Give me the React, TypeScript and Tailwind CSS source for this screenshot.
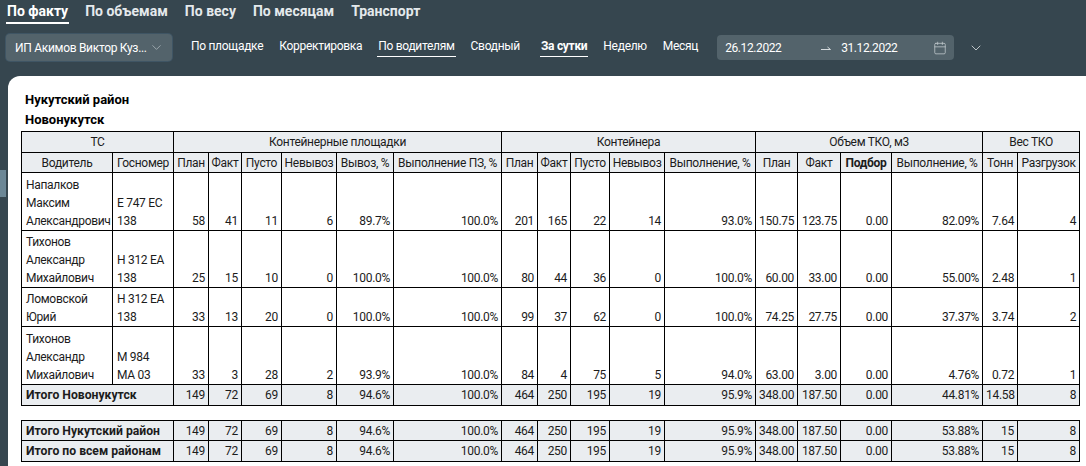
import { Calendar, ChevronDown } from 'lucide-react';

const widths = [91, 61, 35, 33, 40, 55, 57, 108, 36, 33, 39, 55, 91, 42, 43, 51, 91, 35, 62];

interface Row {
    name: string[];
    plate: string[];
    height: string;
    values: string[];
}

const rows: Row[] = [
    {
        name: ['Напалков', 'Максим', 'Александрович'],
        plate: ['Е 747 ЕС', '138'],
        height: 'h-[58px]',
        values: ['58', '41', '11', '6', '89.7%', '100.0%', '201', '165', '22', '14', '93.0%', '150.75', '123.75', '0.00', '82.09%', '7.64', '4'],
    },
    {
        name: ['Тихонов', 'Александр', 'Михайлович'],
        plate: ['Н 312 ЕА', '138'],
        height: 'h-[57px]',
        values: ['25', '15', '10', '0', '100.0%', '100.0%', '80', '44', '36', '0', '100.0%', '60.00', '33.00', '0.00', '55.00%', '2.48', '1'],
    },
    {
        name: ['Ломовской', 'Юрий'],
        plate: ['Н 312 ЕА', '138'],
        height: 'h-[39px]',
        values: ['33', '13', '20', '0', '100.0%', '100.0%', '99', '37', '62', '0', '100.0%', '74.25', '27.75', '0.00', '37.37%', '3.74', '2'],
    },
    {
        name: ['Тихонов', 'Александр', 'Михайлович'],
        plate: ['М 984', 'МА 03'],
        height: 'h-[58px]',
        values: ['33', '3', '28', '2', '93.9%', '100.0%', '84', '4', '75', '5', '94.0%', '63.00', '3.00', '0.00', '4.76%', '0.72', '1'],
    },
];

const totalBase = ['149', '72', '69', '8', '94.6%', '100.0%', '464', '250', '195', '19', '95.9%', '348.00', '187.50', '0.00'];

const Cols = () => (
    <colgroup>
        {widths.map((w, i) => (<col key={i} style={{ width: w }} />))}
    </colgroup>
);

const Th = ({ label, span, bold }: { label: string; span?: number; bold?: boolean }) => (
    <th colSpan={span} className={`border border-black bg-[#eaedf0] p-0 text-center whitespace-nowrap ${bold ? 'font-bold' : 'font-normal'}`}>
        {label}
    </th>
);

const Total = ({ label, values, height }: { label: string; values: string[]; height: string }) => (
    <tr className={`${height} bg-[#eaedf0]`}>
        <td colSpan={2} className="border border-black px-1 py-0 font-bold whitespace-nowrap text-[12.2px] tracking-normal">{label}</td>
        {values.map((v, i) => (
            <td key={i} className="border border-black px-[3px] py-0 text-right">{v}</td>
        ))}
    </tr>
);

const TopTab = ({ label, active }: { label: string; active?: boolean }) => (
    <span className={`px-[1px] pb-[2px] text-[14px] leading-[17px] font-bold border-b-2 ${active ? 'text-white border-white' : 'text-[#e4e9ec] border-transparent'}`}>
        {label}
    </span>
);

const SubTab = ({ label, active, bold }: { label: string; active?: boolean; bold?: boolean }) => (
    <span className={`px-[1px] pb-[2px] text-[12px] tracking-[-0.3px] leading-[15px] whitespace-nowrap text-white border-b ${active ? 'border-white' : 'border-transparent'} ${bold ? 'font-bold' : ''}`}>
        {label}
    </span>
);

export default function App() {
    return (
        <div className="w-[1086px] h-[466px] overflow-hidden bg-[#36464f] font-['Roboto','Noto_Sans',sans-serif] text-[#1c1c1c]">
            <div className="flex gap-[15px] pl-[6px] pt-[3px] h-[27px] items-start">
                <TopTab label="По факту" active />
                <TopTab label="По объемам" />
                <TopTab label="По весу" />
                <TopTab label="По месяцам" />
                <TopTab label="Транспорт" />
            </div>
            <div className="flex items-center h-[27px] mt-[7px] mb-[15px] pl-[6px]">
                <div className="flex items-center justify-between shrink-0 w-[166px] h-[27px] pl-[9px] pr-[8px] rounded bg-[#53636b] shadow-[0_0_0_1px_#3f5564] text-white text-[12px] tracking-[-0.3px] whitespace-nowrap">
                    <span>ИП Акимов Виктор Куз...</span>
                    <ChevronDown size={15} strokeWidth={1} className="text-[#c4ccd0]" />
                </div>
                <div className="flex items-center gap-[14px] ml-[18px]">
                    <SubTab label="По площадке" />
                    <SubTab label="Корректировка" />
                    <SubTab label="По водителям" active />
                    <SubTab label="Сводный" />
                </div>
                <div className="flex items-center gap-[14px] ml-[19px]">
                    <SubTab label="За сутки" active bold />
                    <SubTab label="Неделю" />
                    <SubTab label="Месяц" />
                </div>
                <div className="flex items-center shrink-0 w-[237px] h-[25px] ml-[18px] pl-[8px] pr-[7px] rounded bg-[#53636b] text-white text-[12px] tracking-[-0.4px]">
                    <span className="w-[96px]">26.12.2022</span>
                    <svg width="10" height="6" viewBox="0 0 10 6" className="mr-[10px] text-[#d5dadd]" fill="none" stroke="currentColor">
                        <path d="M0 4.5h9.5M9.5 4.5L6.5 2" />
                    </svg>
                    <span>31.12.2022</span>
                    <Calendar size={14} strokeWidth={1.3} className="ml-auto text-[#c4ccd0]" />
                </div>
                <ChevronDown size={16} strokeWidth={1.2} className="ml-[14px] text-[#dfe4e6]" />
            </div>
            <div className="flex">
                <div className="w-2 shrink-0">
                    <div className="mt-[94px] w-[6px] h-[27px] bg-[#6c8796]" />
                </div>
                <div className="flex-1 h-[390px] bg-white rounded-tl-xl pl-[13px] pt-[14px] text-[12px] tracking-[-0.3px] leading-[18px]">
                    <div className="pl-1 font-bold text-black text-[13px] tracking-normal leading-[20px]">Нукутский район</div>
                    <div className="pl-1 font-bold text-black text-[13px] tracking-normal leading-[20px] mb-[1px]">Новонукутск</div>
                    <table className="table-fixed border-collapse w-[1058px]">
                        <Cols />
                        <thead>
                            <tr className="h-[21px]">
                                <Th label="ТС" span={2} />
                                <Th label="Контейнерные площадки" span={6} />
                                <Th label="Контейнера" span={5} />
                                <Th label="Объем ТКО, м3" span={4} />
                                <Th label="Вес ТКО" span={2} />
                            </tr>
                            <tr className="h-[20px]">
                                <Th label="Водитель" />
                                <Th label="Госномер" />
                                <Th label="План" />
                                <Th label="Факт" />
                                <Th label="Пусто" />
                                <Th label="Невывоз" />
                                <Th label="Вывоз, %" />
                                <Th label="Выполнение ПЗ, %" />
                                <Th label="План" />
                                <Th label="Факт" />
                                <Th label="Пусто" />
                                <Th label="Невывоз" />
                                <Th label="Выполнение, %" />
                                <Th label="План" />
                                <Th label="Факт" />
                                <Th label="Подбор" bold />
                                <Th label="Выполнение, %" />
                                <Th label="Тонн" />
                                <Th label="Разгрузок" />
                            </tr>
                        </thead>
                        <tbody>
                            {rows.map((row, i) => (
                                <tr key={i} className={row.height}>
                                    <td className="border border-black px-1 py-0 align-bottom whitespace-nowrap">
                                        {row.name.map((n, j) => (<div key={j}>{n}</div>))}
                                    </td>
                                    <td className="border border-black px-1 py-0 align-bottom whitespace-nowrap">
                                        {row.plate.map((p, j) => (<div key={j}>{p}</div>))}
                                    </td>
                                    {row.values.map((v, j) => (
                                        <td key={j} className="border border-black px-[3px] py-0 align-bottom text-right">{v}</td>
                                    ))}
                                </tr>
                            ))}
                            <Total label="Итого Новонукутск" height="h-[21px]" values={[...totalBase, '44.81%', '14.58', '8']} />
                        </tbody>
                    </table>
                    <table className="table-fixed border-collapse w-[1058px] mt-[14px]">
                        <Cols />
                        <tbody>
                            <Total label="Итого Нукутский район" height="h-[20px]" values={[...totalBase, '53.88%', '15', '8']} />
                            <Total label="Итого по всем районам" height="h-[21px]" values={[...totalBase, '53.88%', '15', '8']} />
                        </tbody>
                    </table>
                </div>
            </div>
        </div>
    );
}
